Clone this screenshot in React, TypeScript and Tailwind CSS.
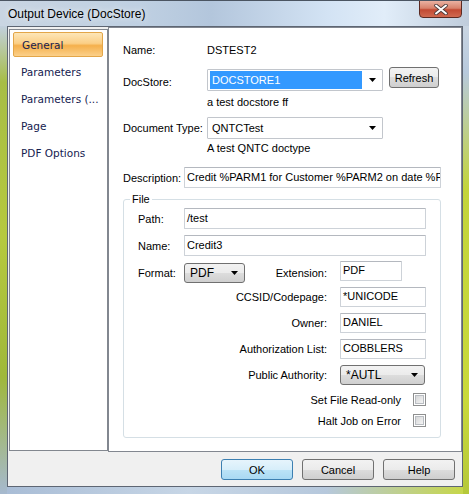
import React from 'react'

const GRAY_BTN =
  'border border-[#707070] bg-[linear-gradient(180deg,#f2f2f2_0%,#ebebeb_50%,#dddddd_50%,#cfcfcf_100%)]'

function Arrow() {
  return (
    <svg width="7" height="4" viewBox="0 0 7 4" className="shrink-0">
      <path d="M0 0h7L3.5 4z" fill="#000" />
    </svg>
  )
}

function Combo({ value, w, selected }: { value: string; w: string; selected?: boolean }) {
  return (
    <div className={`${w} h-[22px] flex items-center border border-[#c2c6cc] bg-white rounded-[1px] pl-[2px] pr-[6px]`}>
      <div
        className={`flex-1 h-[18px] flex items-center pl-[2px] ${
          selected ? 'bg-[#3399ff] text-white' : 'text-black'
        }`}
      >
        {value}
      </div>
      <div className="w-[14px] flex justify-end">
        <Arrow />
      </div>
    </div>
  )
}

function DropButton({ value, w }: { value: string; w: string }) {
  return (
    <div className={`${w} h-[20px] flex items-center justify-between rounded-[3px] pl-[5px] pr-[6px] ${GRAY_BTN}`}>
      <span className="text-[12px]">{value}</span>
      <Arrow />
    </div>
  )
}

function TextBox({ value, w, h = 'h-[20px]' }: { value: string; w: string; h?: string }) {
  return (
    <div
      className={`${w} ${h} flex items-center overflow-hidden whitespace-nowrap border border-[#cdd2d8] border-t-[#b4b8bf] bg-white rounded-[1px] pl-[2px] pb-[2px]`}
    >
      {value}
    </div>
  )
}

function Button({ label, primary }: { label: string; primary?: boolean }) {
  return (
    <div
      className={`w-[72px] h-[21px] flex items-center justify-center rounded-[3px] ${
        primary
          ? 'border border-[#3c7fb1] bg-[linear-gradient(180deg,#e6f4fc_0%,#d7eefa_50%,#bce3f7_50%,#a9d9f3_100%)]'
          : GRAY_BTN
      }`}
    >
      {label}
    </div>
  )
}

function CheckBox() {
  return (
    <div className="w-[13px] h-[13px] border border-[#8e8f8f] bg-white p-[1px]">
      <div className="w-full h-full border border-[#b9bdc2] bg-[linear-gradient(135deg,#d6d7d8_0%,#f4f4f4_100%)]" />
    </div>
  )
}

function RightRow({ label, children, mt }: { label: string; children: React.ReactNode; mt: string }) {
  return (
    <div className={`${mt} h-[20px] flex items-center`}>
      <div className="w-[189px] text-right">{label}</div>
      <div className="ml-[13px]">{children}</div>
    </div>
  )
}

function CheckRow({ label, mt }: { label: string; mt: string }) {
  return (
    <div className={`${mt} h-[13px] flex items-center justify-end gap-[12px] pr-[14px]`}>
      <span>{label}</span>
      <CheckBox />
    </div>
  )
}

const NAV = ['General', 'Parameters', 'Parameters (...', 'Page', 'PDF Options']

export default function App() {
  return (
    <div className="w-[469px] h-[494px] flex flex-col overflow-hidden border-t border-[#4b5562] text-[11px] leading-[14px] text-black font-['Liberation_Sans',Arial,sans-serif] bg-[linear-gradient(90deg,#c9d5e2_0%,#bfd0e2_30%,#b3c6dc_45%,#d3e3f4_70%,#e1edf9_82%,#bfccdb_100%)]">
      {/* Title bar */}
      <div className="h-[25px] shrink-0 flex items-start justify-between">
        <div className="pl-[8px] pt-[6px] text-[12px] leading-[15px] [text-shadow:0_0_6px_#ffffff]">
          Output Device (DocStore)
        </div>
        <div className="mr-[7px] mt-[-1px] w-[43px] h-[18px] flex items-center justify-center rounded-b-[4px] border border-[#5b2a22] bg-[linear-gradient(180deg,#eab1a2_0%,#d7826c_45%,#c24a33_55%,#d06a50_100%)]">
          <svg width="14" height="11" viewBox="0 0 14 11">
            <path d="M2 1.5l10 8M12 1.5l-10 8" stroke="#4a3a3a" strokeWidth="3.6" strokeLinecap="round" />
            <path d="M2 1.5l10 8M12 1.5l-10 8" stroke="#ffffff" strokeWidth="2" strokeLinecap="round" />
          </svg>
        </div>
      </div>

      <div className="flex flex-1">
        {/* left frame */}
        <div className="w-[7px] bg-[linear-gradient(180deg,#c2d0de_0%,#a7bd45_12%,#b6c93e_45%,#9fb83a_75%,#a6b9cf_100%)]" />

        <div className="flex-1 flex flex-col">
          {/* Client area */}
          <div className="h-[461px] flex flex-col border border-[#5e6673] bg-[#f0f0f0]">
            <div className="flex h-[425px]">
              {/* Nav list */}
              <div className="ml-[1px] mt-[2px] w-[99px] h-[422px] border border-[#82878f] bg-white pt-[2px] pl-[3px] font-['DejaVu_Sans',sans-serif] text-[10.5px] text-[#15214f]">
                {NAV.map((n, i) => (
                  <div
                    key={n}
                    className={`h-[25px] mb-[2px] w-[90px] flex items-center pl-[8px] ${
                      i === 0
                        ? 'rounded-[2px] border border-[#e3a648] bg-[linear-gradient(180deg,#fde6b8_0%,#fbcf86_45%,#f5b04c_55%,#fbd08a_100%)]'
                        : ''
                    }`}
                  >
                    {n}
                  </div>
                ))}
              </div>

              {/* Page panel */}
              <div className="flex-1 border border-[#828790] bg-white pl-[14px] flex flex-col">
                <div className="mt-[15px] h-[14px] flex">
                  <div className="w-[84px]">Name:</div>
                  <div>DSTEST2</div>
                </div>

                <div className="mt-[10px] h-[24px] flex items-start">
                  <div className="w-[84px] pt-[8px]">DocStore:</div>
                  <div className="mt-[2px]">
                    <Combo value="DOCSTORE1" w="w-[176px]" selected />
                  </div>
                  <div className="ml-[6px]">
                    <div className={`w-[50px] h-[21px] flex items-center justify-center rounded-[3px] ${GRAY_BTN}`}>
                      Refresh
                    </div>
                  </div>
                </div>

                <div className="mt-[4px] h-[14px] pl-[84px]">a test docstore ff</div>

                <div className="mt-[8px] h-[22px] flex items-center">
                  <div className="w-[84px]">Document Type:</div>
                  <Combo value="QNTCTest" w="w-[176px]" />
                </div>

                <div className="mt-[2px] h-[14px] pl-[84px]">A test QNTC doctype</div>

                <div className="mt-[12px] h-[21px] flex items-center">
                  <div className="w-[61px]">Description:</div>
                  <TextBox value="Credit %PARM1 for Customer %PARM2 on date %PARM3" w="w-[257px]" h="h-[21px]" />
                </div>

                {/* File group */}
                <fieldset className="mt-[4px] w-[318px] border border-[#d5dfe5] rounded-[3px] pb-[10px]">
                  <legend className="ml-[6px] px-[2px] leading-[14px]">File</legend>
                  <div className="pl-[14px] flex flex-col">
                    <div className="mt-[2px] h-[21px] flex items-center">
                      <div className="w-[46px]">Path:</div>
                      <TextBox value="/test" w="w-[242px]" h="h-[21px]" />
                    </div>
                    <div className="mt-[6px] h-[21px] flex items-center">
                      <div className="w-[46px]">Name:</div>
                      <TextBox value="Credit3" w="w-[242px]" h="h-[21px]" />
                    </div>
                    <div className="mt-[5px] h-[22px] flex items-start">
                      <div className="w-[189px] h-[22px] flex items-center">
                        <div className="w-[46px] pt-[2px]">Format:</div>
                        <div className="mt-[2px]">
                          <DropButton value="PDF" w="w-[61px]" />
                        </div>
                        <div className="flex-1 text-right pt-[2px]">Extension:</div>
                      </div>
                      <div className="ml-[13px]">
                        <TextBox value="PDF" w="w-[62px]" />
                      </div>
                    </div>
                    <RightRow label="CCSID/Codepage:" mt="mt-[4px]">
                      <TextBox value="*UNICODE" w="w-[86px]" />
                    </RightRow>
                    <RightRow label="Owner:" mt="mt-[6px]">
                      <TextBox value="DANIEL" w="w-[86px]" />
                    </RightRow>
                    <RightRow label="Authorization List:" mt="mt-[6px]">
                      <TextBox value="COBBLERS" w="w-[86px]" />
                    </RightRow>
                    <RightRow label="Public Authority:" mt="mt-[6px]">
                      <DropButton value="*AUTL" w="w-[85px]" />
                    </RightRow>
                    <CheckRow label="Set File Read-only" mt="mt-[8px]" />
                    <CheckRow label="Halt Job on Error" mt="mt-[8px]" />
                  </div>
                </fieldset>
              </div>
            </div>

            {/* Dialog buttons */}
            <div className="flex-1 flex justify-end items-start gap-[9px] pt-[7px] pr-[7px]">
              <Button label="OK" primary />
              <Button label="Cancel" />
              <Button label="Help" />
            </div>
          </div>
          {/* bottom frame */}
          <div className="flex-1 bg-[linear-gradient(90deg,#a9bdd6_0%,#c7d6e6_40%,#b6c8dc_70%,#c6d64a_100%)]" />
        </div>

        {/* right frame */}
        <div className="w-[6px] bg-[linear-gradient(180deg,#c9d5e2_0%,#b7c9dc_10%,#c3d43a_35%,#c9d93a_80%,#b5c83a_100%)]" />
      </div>
    </div>
  )
}
